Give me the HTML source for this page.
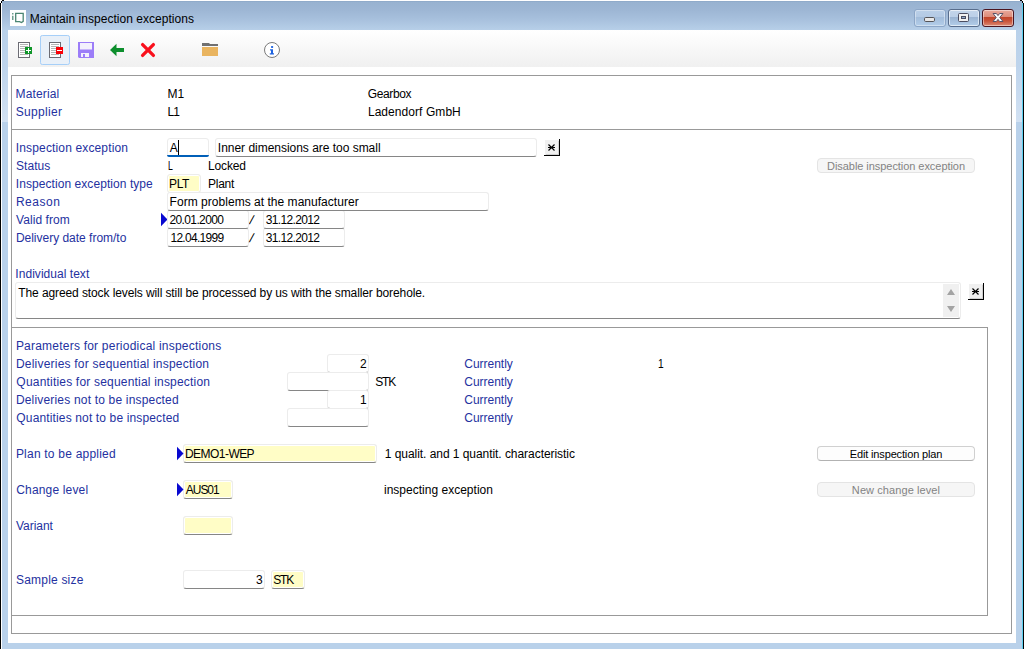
<!DOCTYPE html>
<html lang="en">
<head>
<meta charset="utf-8">
<title>Maintain inspection exceptions</title>
<style>
html,body{margin:0;padding:0;}
body{width:1024px;height:649px;background:#fff;position:relative;overflow:hidden;
  font-family:"Liberation Sans",sans-serif;font-size:12px;line-height:14px;color:#000;}
*{box-sizing:border-box;}
.l,.v,.in,.btn,.ln,.ttl{position:absolute;}
/* window frame */
#frame{position:absolute;left:2px;top:1px;width:1020px;height:648px;background:#b9d1ea;overflow:hidden;}
#cap{position:absolute;left:0;top:0;width:1020px;height:29px;
  background:linear-gradient(#90abca 0,#90abca 1px,#98b2d0 1px,#9db6d4 30%,#a6bfdc 60%,#b7cfe8 100%);}
.px{position:absolute;background:#000;}
#client{position:absolute;left:8px;top:30px;width:1008px;height:613px;background:#fff;}
#tb{position:absolute;left:8px;top:30px;width:1008px;height:37px;
  background:linear-gradient(#ffffff 0%,#fdfdfd 15%,#f0f0f0 100%);}
.ttl{color:#000;white-space:nowrap;height:14px;}
#appico{position:absolute;left:10px;top:10px;width:16px;height:16px;background:#fff;}
/* labels: Arial-like blue */
.l{color:#2431a0;white-space:nowrap;height:14px;}
.v{color:#000;white-space:nowrap;height:14px;}
.ln{background:#999;}
/* inputs */
.in{height:19px;border:1px solid #ececec;border-bottom:1px solid #868686;border-radius:3px;background:#fff;
  white-space:nowrap;overflow:hidden;}
.in span{position:absolute;top:2px;height:14px;white-space:nowrap;}
.in.ta span{top:3px;}
.in.foc{overflow:visible;border-bottom-color:#ececec;}
.in.foc::after{content:"";position:absolute;left:-1px;right:-1px;bottom:-1px;height:2px;background:#005fb8;border-radius:0 0 2px 2px;}
.in.y{box-shadow:inset 0 0 0 1px #fff;background:#fffdc6;}
.in.ro{border-bottom-color:#ececec;}
.btn{height:15px;border:1px solid #d0d0d0;border-bottom-color:#b2b2b2;border-radius:4px;background:#fdfdfd;text-align:center;
  font-size:11px;line-height:14px;white-space:nowrap;}
.btn.dis{border-color:#e4e4e4;background:#f6f6f6;color:#838383;}
.cb{position:absolute;top:9px;width:32px;height:18px;border-radius:3px;border:1px solid #7f99bb;
  box-shadow:inset 0 0 0 1px rgba(255,255,255,.38);}
#bmin{left:914px;background:linear-gradient(#b9cfe8 0%,#b4cae4 42%,#a2bcda 45%,#b3ceea 100%);border-color:#8ca6c7;}
#bmax{left:948px;background:linear-gradient(#c3d5ea 0%,#bcd0e8 42%,#9bb4d2 45%,#b3ceea 100%);border-color:#586d8c;
  box-shadow:inset 0 0 0 1px rgba(255,255,255,.6);}
#bcls{left:982px;background:linear-gradient(#eaa99b 0%,#dd8d7b 42%,#c2452a 45%,#c85238 68%,#dc8a74 100%);border-color:#4b1520;
  box-shadow:inset 0 0 0 1px rgba(255,255,255,.45);}
#ov{position:absolute;left:0;top:0;width:1024px;height:649px;pointer-events:none;}
.sg{position:absolute;top:30px;width:6px;height:92px;background:linear-gradient(#b9d1ea 0%,#bed4ec 40%,#d2e1f2 100%);}
</style>
</head>
<body>
<div id="frame"><div id="cap"></div></div>
<div class="px" style="left:0;top:3px;width:1px;height:646px;"></div>
<div class="px" style="left:1px;top:1px;width:1px;height:2px;"></div>
<div class="px" style="left:2px;top:0;width:2px;height:1px;"></div>
<div class="px" style="left:1023px;top:3px;width:1px;height:646px;"></div>
<div class="px" style="left:1022px;top:1px;width:1px;height:2px;"></div>
<div class="px" style="left:1020px;top:0;width:2px;height:1px;"></div>
<div class="px" style="left:1022px;top:3px;width:1px;height:646px;background:#5cd0f0;"></div>
<div class="sg" style="left:2px;"></div><div class="sg" style="left:1016px;"></div>
<div id="client"></div>
<div id="tb"></div>
<div id="appico"></div>
<div class="ttl" id="t1" style="left:29.64px;top:12px;letter-spacing:0.030px;">Maintain inspection exceptions</div>
<div class="cb" id="bmin"></div><div class="cb" id="bmax"></div><div class="cb" id="bcls"></div>
<div class="ln" style="left:11px;top:75px;width:1001px;height:1px;"></div>
<div class="ln" style="left:11px;top:75px;width:1px;height:559px;"></div>
<div class="ln" style="left:1011px;top:75px;width:1px;height:559px;"></div>
<div class="ln" style="left:11px;top:633px;width:1001px;height:1px;"></div>
<div class="ln" style="left:11px;top:129px;width:1001px;height:1px;"></div>
<div class="ln" style="left:11px;top:327px;width:977px;height:1px;"></div>
<div class="ln" style="left:987px;top:327px;width:1px;height:289px;"></div>
<div class="ln" style="left:11px;top:615px;width:977px;height:1px;"></div>
<div class="l" id="t2" style="left:15.62px;top:87px;letter-spacing:0.119px;">Material</div>
<div class="v" id="t3" style="left:167.62px;top:87px;letter-spacing:-0.179px;">M1</div>
<div class="v" id="t4" style="left:367.79px;top:87px;letter-spacing:-0.365px;">Gearbox</div>
<div class="l" id="t5" style="left:15.66px;top:105px;letter-spacing:0.347px;">Supplier</div>
<div class="v" id="t6" style="left:167.62px;top:105px;letter-spacing:-1.000px;">L1</div>
<div class="v" id="t7" style="left:367.90px;top:105px;letter-spacing:0.065px;">Ladendorf GmbH</div>
<div class="l" id="t8" style="left:15.83px;top:141px;letter-spacing:0.143px;">Inspection exception</div>
<div class="in foc" style="left:167px;top:138px;width:42px;"><span id="t9" style="left:1.84px;">A</span></div>
<div class="in" style="left:215px;top:138px;width:322px;"><span id="t10" style="left:1.83px;letter-spacing:-0.023px;">Inner dimensions are too small</span></div>
<div class="l" id="t11" style="left:16.06px;top:159px;letter-spacing:0.029px;">Status</div>
<div class="v" id="t12" style="left:167.90px;top:159px;transform:scaleX(.720);transform-origin:0 0;">L</div>
<div class="v" id="t13" style="left:207.90px;top:159px;letter-spacing:-0.110px;">Locked</div>
<div class="btn dis" style="left:817px;top:158px;width:158px;"><span id="t14" style="letter-spacing:-0.052px;">Disable inspection exception</span></div>
<div class="l" id="t15" style="left:15.83px;top:177px;letter-spacing:0.064px;">Inspection exception type</div>
<div class="in y ro" style="left:167px;top:174px;width:34px;"><span id="t16" style="left:1.00px;letter-spacing:-0.340px;">PLT</span></div>
<div class="v" id="t17" style="left:207.90px;top:177px;letter-spacing:-0.206px;">Plant</div>
<div class="l" id="t18" style="left:15.90px;top:195px;letter-spacing:0.537px;">Reason</div>
<div class="in" style="left:167px;top:192px;width:322px;z-index:3;"><span id="t19" style="left:1.62px;letter-spacing:0.030px;">Form problems at the manufacturer</span></div>
<div class="l" id="t20" style="left:16.06px;top:213px;letter-spacing:0.062px;">Valid from</div>
<div class="in" style="left:167px;top:210px;width:82px;z-index:2;"><span id="t21" style="left:1.45px;letter-spacing:-0.615px;">20.01.2000</span></div>
<div class="v" id="t22" style="left:247.51px;top:213px;transform:skewX(-14deg) scaleX(1.150);transform-origin:0 100%;">/</div>
<div class="in" style="left:263px;top:210px;width:82px;z-index:2;"><span id="t23" style="left:1.77px;letter-spacing:-0.648px;">31.12.2012</span></div>
<div class="l" id="t24" style="left:15.90px;top:231px;letter-spacing:-0.012px;">Delivery date from/to</div>
<div class="in" style="left:167px;top:228px;width:82px;"><span id="t25" style="left:2.43px;letter-spacing:-0.706px;">12.04.1999</span></div>
<div class="v" id="t26" style="left:247.51px;top:231px;transform:skewX(-14deg) scaleX(1.150);transform-origin:0 100%;">/</div>
<div class="in" style="left:263px;top:228px;width:82px;"><span id="t27" style="left:1.77px;letter-spacing:-0.648px;">31.12.2012</span></div>
<div class="l" id="t28" style="left:15.37px;top:267px;letter-spacing:0.034px;">Individual text</div>
<div class="in ta" style="left:15px;top:282px;width:946px;height:37px;"><span id="t29" style="left:2.32px;letter-spacing:-0.101px;">The agreed stock levels will still be processed by us with the smaller borehole.</span></div>
<div class="l" id="t30" style="left:15.90px;top:339px;letter-spacing:0.219px;">Parameters for periodical inspections</div>
<div class="l" id="t31" style="left:15.90px;top:357px;letter-spacing:0.219px;">Deliveries for sequential inspection</div>
<div class="in" style="left:327px;top:354px;width:42px;"><span id="t32" style="right:1.40px;">2</span></div>
<div class="l" id="t33" style="left:464.26px;top:357px;letter-spacing:-0.011px;">Currently</div>
<div class="v" id="t34" style="left:657.80px;top:357px;transform:scaleX(.850);transform-origin:0 0;">1</div>
<div class="l" id="t35" style="left:16.36px;top:375px;letter-spacing:0.195px;">Quantities for sequential inspection</div>
<div class="in" style="left:287px;top:372px;width:82px;"></div>
<div class="v" id="t36" style="left:375.32px;top:375px;letter-spacing:-1.227px;">STK</div>
<div class="l" id="t37" style="left:464.26px;top:375px;letter-spacing:-0.011px;">Currently</div>
<div class="l" id="t38" style="left:15.90px;top:393px;letter-spacing:0.183px;">Deliveries not to be inspected</div>
<div class="in" style="left:327px;top:390px;width:42px;"><span id="t39" style="right:1.40px;">1</span></div>
<div class="l" id="t40" style="left:464.26px;top:393px;letter-spacing:-0.011px;">Currently</div>
<div class="l" id="t41" style="left:16.36px;top:411px;letter-spacing:0.140px;">Quantities not to be inspected</div>
<div class="in" style="left:287px;top:408px;width:82px;"></div>
<div class="l" id="t42" style="left:464.26px;top:411px;letter-spacing:-0.011px;">Currently</div>
<div class="l" id="t43" style="left:15.90px;top:447px;letter-spacing:0.215px;">Plan to be applied</div>
<div class="in y" style="left:183px;top:444px;width:194px;"><span id="t44" style="left:1.00px;letter-spacing:-0.547px;">DEMO1-WEP</span></div>
<div class="v" id="t45" style="left:384.80px;top:447px;letter-spacing:-0.052px;">1 qualit. and 1 quantit. characteristic</div>
<div class="btn" style="left:817px;top:446px;width:158px;"><span id="t46" style="letter-spacing:-0.146px;">Edit inspection plan</span></div>
<div class="l" id="t47" style="left:16.26px;top:483px;letter-spacing:0.160px;">Change level</div>
<div class="in y" style="left:183px;top:480px;width:50px;"><span id="t48" style="left:1.84px;letter-spacing:-1.054px;">AUS01</span></div>
<div class="v" id="t49" style="left:383.98px;top:483px;letter-spacing:0.012px;">inspecting exception</div>
<div class="btn dis" style="left:817px;top:482px;width:158px;"><span id="t50" style="letter-spacing:0.089px;">New change level</span></div>
<div class="l" id="t51" style="left:16.06px;top:519px;letter-spacing:-0.051px;">Variant</div>
<div class="in y" style="left:183px;top:516px;width:50px;"></div>
<div class="l" id="t52" style="left:16.06px;top:573px;letter-spacing:0.194px;">Sample size</div>
<div class="in" style="left:183px;top:570px;width:82px;"><span id="t53" style="right:1.40px;">3</span></div>
<div class="in y" style="left:271px;top:570px;width:34px;"><span id="t54" style="left:1.30px;letter-spacing:-1.198px;">STK</span></div>
<svg id="ov" width="1024" height="649" viewBox="0 0 1024 649">
<!-- app icon -->
<g fill="none" stroke="#4a8572">
<path d="M12.800 13.100v1.400M12.800 15.800v4.200" stroke-width="1.200"/>
<path d="M15.700 13.400h7.500v8l-1.700 1.100-1.900-.900h-3.900z" stroke-width="1.300"/>
</g>
<!-- toolbar selected button -->
<rect x="40.5" y="35.5" width="29" height="29" rx="1.800" fill="#e9f0f8" stroke="#a6cff8"/>
<!-- new doc -->
<rect x="18.5" y="42.5" width="11" height="15" fill="#fff" stroke="#6c6c74" stroke-width="1"/><rect x="20" y="44" width="8" height="1" fill="#b4b4b4"/><rect x="20" y="46" width="8" height="1" fill="#b4b4b4"/><rect x="20" y="48" width="8" height="1" fill="#b4b4b4"/><rect x="20" y="50" width="8" height="1" fill="#b4b4b4"/><rect x="20" y="52" width="8" height="1" fill="#b4b4b4"/><rect x="20" y="54" width="8" height="1" fill="#b4b4b4"/>
<rect x="25" y="47" width="7" height="7" fill="#0f9629"/>
<rect x="28" y="48" width="1" height="5" fill="#fff"/><rect x="26" y="50" width="5" height="1" fill="#fff"/>
<!-- delete doc -->
<rect x="49.5" y="42.5" width="11" height="15" fill="#fff" stroke="#6c6c74" stroke-width="1"/><rect x="51" y="44" width="8" height="1" fill="#b4b4b4"/><rect x="51" y="46" width="8" height="1" fill="#b4b4b4"/><rect x="51" y="48" width="8" height="1" fill="#b4b4b4"/><rect x="51" y="50" width="8" height="1" fill="#b4b4b4"/><rect x="51" y="52" width="8" height="1" fill="#b4b4b4"/><rect x="51" y="54" width="8" height="1" fill="#b4b4b4"/>
<rect x="56" y="47" width="7" height="7" fill="#fb0007"/>
<rect x="57" y="50" width="5" height="1" fill="#fff"/>
<!-- save -->
<path d="M78 42h16v16h-15l-1-1z" fill="#9c7df8"/>
<rect x="80" y="43" width="12" height="6.5" fill="#f3f1fd"/>
<rect x="81" y="53" width="8" height="4" fill="#f3f1fd"/>
<rect x="83" y="54" width="2" height="3" fill="#9c7df8"/>
<!-- back arrow -->
<path d="M110 50l6.5-6.2v4.2h7.5v4h-7.500v4.200z" fill="#0d8f2d"/>
<!-- red X -->
<path d="M142.600 44.600l10.800 10.800M153.400 44.600l-10.800 10.800" stroke="#f9101c" stroke-width="3.300" stroke-linecap="round" fill="none"/>
<!-- folder -->
<path d="M202 43h7l1 1h8v2h-16z" fill="#707070"/>
<rect x="202" y="47" width="16" height="9" fill="#e9b45f"/>
<!-- info -->
<circle cx="272" cy="50" r="7.500" fill="#fff" stroke="#7a7a7a" stroke-width="1"/>
<rect x="271" y="46" width="2.200" height="2" rx=".8" fill="#1e63e0"/>
<path d="M270 49.200h3v4h1v1.200h-4.200v-1.200h1.200v-2.800h-1z" fill="#1e63e0"/>
<!-- caption glyphs -->
<rect x="924.500" y="17.500" width="10" height="4" rx="1.200" fill="#e9e9e9" stroke="#545458"/>
<rect x="958.500" y="13.500" width="10" height="8" rx="1" fill="#f1f1f1" stroke="#4b4d60"/>
<rect x="961.500" y="16.500" width="4" height="2" fill="#8fa9c9" stroke="#4b4d60"/>
<path d="M993 13.500h3.400l1.600 2.100 1.600-2.100h3.400l-3.200 4 3.200 4h-3.400l-1.600-2.100-1.600 2.100h-3.400l3.200-4z" fill="#fbfbfb" stroke="#5a5468" stroke-width="1" stroke-linejoin="round"/>
<!-- star buttons -->
<g transform="translate(0,0)">
<rect x="545" y="140" width="14" height="15" fill="#f0f0f0"/>
<rect x="558" y="141" width="1" height="14" fill="#d0d0d0"/><rect x="546" y="154" width="13" height="1" fill="#d0d0d0"/>
<rect x="559" y="139" width="1" height="17" fill="#000"/><rect x="544" y="155" width="16" height="1" fill="#000"/>
<rect x="548" y="147" width="7" height="1" fill="#000"/><path d="M548.500 144.500l6 6M554.500 144.500l-6 6" stroke="#000" stroke-width="1.150" fill="none"/>
</g>
<g transform="translate(424,144)">
<rect x="545" y="140" width="14" height="15" fill="#f0f0f0"/>
<rect x="558" y="141" width="1" height="14" fill="#d0d0d0"/><rect x="546" y="154" width="13" height="1" fill="#d0d0d0"/>
<rect x="559" y="139" width="1" height="17" fill="#000"/><rect x="544" y="155" width="16" height="1" fill="#000"/>
<rect x="548" y="147" width="7" height="1" fill="#000"/><path d="M548.500 144.500l6 6M554.500 144.500l-6 6" stroke="#000" stroke-width="1.150" fill="none"/>
</g>
<!-- required triangles -->
<path d="M161 212.800l6.500 6.700-6.500 6.700z" fill="#0808d0"/>
<path d="M177 446.800l6.500 6.700-6.500 6.700z" fill="#0808d0"/>
<path d="M177 482.800l6.500 6.700-6.500 6.700z" fill="#0808d0"/>
<!-- caret -->
<rect x="178" y="140" width="1" height="15" fill="#000"/>
<!-- textarea scrollbar -->
<rect x="943" y="284" width="16" height="33" fill="#f0f0f0"/>
<path d="M947 295l4-6 4 6z" fill="#a3a3a3"/>
<path d="M947 306l4 6 4-6z" fill="#a3a3a3"/>
</svg>
</body>
</html>
